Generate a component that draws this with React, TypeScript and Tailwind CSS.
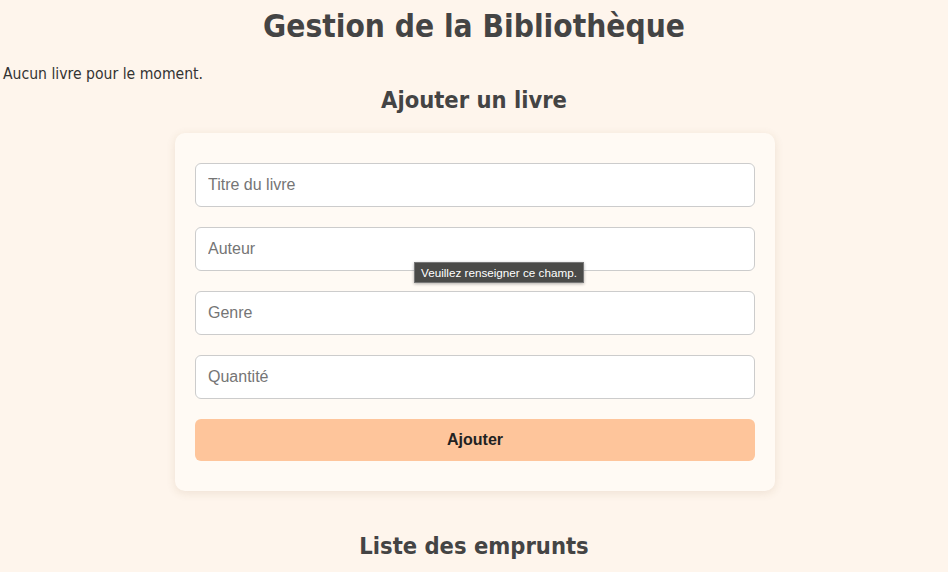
import React from 'react'

const fields = ['Titre du livre', 'Auteur', 'Genre', 'Quantité']

const App = () => {
  return (
    <div className="min-h-screen bg-[#fef5ec] text-[#333] font-['DejaVu_Sans_Condensed','DejaVu_Sans',sans-serif]">
      <h1 className="text-center text-[31.4px] font-bold leading-[52px] text-[#444]">Gestion de la Bibliothèque</h1>
      <p className="mt-3 pl-[3px] text-[15.6px] leading-[20px]">Aucun livre pour le moment.</p>
      <h2 className="mt-[2px] text-center text-[23.5px] font-bold leading-[28px] text-[#444]">Ajouter un livre</h2>

      <form className="relative mx-auto mt-[19px] flex w-[600px] translate-x-[1px] flex-col gap-5 rounded-[10px] bg-[#fffaf4] px-5 py-[30px] shadow-[0_2px_10px_rgba(120,80,30,0.12)]">
        {fields.map((f) => (
          <input
            key={f}
            placeholder={f}
            className="h-[44px] w-full rounded-[6px] border border-[#ccc] bg-white px-3 font-['Liberation_Sans',Arial,sans-serif] text-[16px] text-[#333] placeholder:text-[#757575] outline-none"
          />
        ))}
        <button
          type="button"
          className="h-[42px] w-full rounded-[6px] bg-[#fec59b] font-['Liberation_Sans',Arial,sans-serif] text-[16px] font-bold text-[#222]"
        >
          Ajouter
        </button>

        <div className="absolute left-[239px] top-[129px] border border-[#777] bg-[#4a4a48] px-[6px] py-[3px] font-['Liberation_Sans',Arial,sans-serif] text-[11.7px] leading-[13px] text-white shadow-[0_1px_3px_rgba(0,0,0,0.3)]">
          Veuillez renseigner ce champ.
        </div>
      </form>

      <h2 className="mt-[41px] text-center text-[23.5px] font-bold leading-[28px] text-[#444]">Liste des emprunts</h2>
    </div>
  )
}

export default App
